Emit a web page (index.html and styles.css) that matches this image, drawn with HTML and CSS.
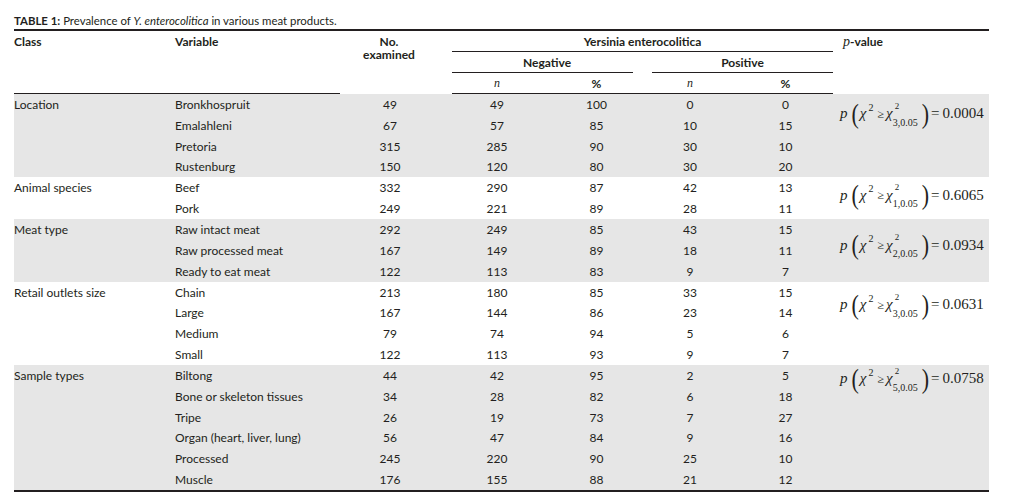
FILE: index.html
```html
<!DOCTYPE html>
<html>
<head>
<meta charset="utf-8">
<link rel="stylesheet" href="styles.css">
</head>
<body>
<div class="page">
  <div class="caption"><b>TABLE 1:</b> Prevalence of <i>Y. enterocolitica</i> in various meat products.</div>
  <table class="tbl">
    <colgroup>
      <col class="c-class"><col class="c-var"><col class="c-no"><col class="c-gap1">
      <col class="c-nn"><col class="c-np"><col class="c-gap2"><col class="c-pn"><col class="c-pp"><col class="c-pv">
    </colgroup>
    <thead>
      <tr class="hA">
        <th class="l">Class</th>
        <th class="l">Variable</th>
        <th class="noexam" rowspan="3"><span class="ln">No.</span><span class="ln">examined</span></th>
        <th rowspan="3"></th>
        <th class="rule" colspan="5">Yersinia enterocolitica</th>
        <th class="l pvh" rowspan="3"><i class="serif">p</i>-value</th>
      </tr>
      <tr class="hB">
        <th></th><th></th>
        <th class="rule neg" colspan="2">Negative</th>
        <th></th>
        <th class="rule" colspan="2">Positive</th>
      </tr>
      <tr class="hC">
        <th></th><th></th>
        <th><i class="serif n">n</i></th>
        <th class="pc">%</th>
        <th></th>
        <th><i class="serif n">n</i></th>
        <th class="pp">%</th>
      </tr>
    </thead>
    <tbody class="shade">
      <tr><td class="l">Location</td><td class="l">Bronkhospruit</td><td>49</td><td></td><td>49</td><td class="pc">100</td><td></td><td>0</td><td class="pp">0</td>
        <td class="pv o1" rowspan="4"><span class="f"><i>p</i><span class="par">(</span><i>χ</i><sup class="s1">2</sup><span class="ge">≥</span><i>χ</i><span class="ss"><span class="up">2</span><span class="dn">3,0.05</span></span><span class="par">)</span><span class="eq">=</span>0.0004</span></td></tr>
      <tr><td></td><td class="l">Emalahleni</td><td>67</td><td></td><td>57</td><td class="pc">85</td><td></td><td>10</td><td class="pp">15</td></tr>
      <tr><td></td><td class="l">Pretoria</td><td>315</td><td></td><td>285</td><td class="pc">90</td><td></td><td>30</td><td class="pp">10</td></tr>
      <tr><td></td><td class="l">Rustenburg</td><td>150</td><td></td><td>120</td><td class="pc">80</td><td></td><td>30</td><td class="pp">20</td></tr>
    </tbody>
    <tbody>
      <tr><td class="l">Animal species</td><td class="l">Beef</td><td>332</td><td></td><td>290</td><td class="pc">87</td><td></td><td>42</td><td class="pp">13</td>
        <td class="pv o2" rowspan="2"><span class="f"><i>p</i><span class="par">(</span><i>χ</i><sup class="s1">2</sup><span class="ge">≥</span><i>χ</i><span class="ss"><span class="up">2</span><span class="dn">1,0.05</span></span><span class="par">)</span><span class="eq">=</span>0.6065</span></td></tr>
      <tr><td></td><td class="l">Pork</td><td>249</td><td></td><td>221</td><td class="pc">89</td><td></td><td>28</td><td class="pp">11</td></tr>
    </tbody>
    <tbody class="shade">
      <tr><td class="l">Meat type</td><td class="l">Raw intact meat</td><td>292</td><td></td><td>249</td><td class="pc">85</td><td></td><td>43</td><td class="pp">15</td>
        <td class="pv o3" rowspan="3"><span class="f"><i>p</i><span class="par">(</span><i>χ</i><sup class="s1">2</sup><span class="ge">≥</span><i>χ</i><span class="ss"><span class="up">2</span><span class="dn">2,0.05</span></span><span class="par">)</span><span class="eq">=</span>0.0934</span></td></tr>
      <tr><td></td><td class="l">Raw processed meat</td><td>167</td><td></td><td>149</td><td class="pc">89</td><td></td><td>18</td><td class="pp">11</td></tr>
      <tr><td></td><td class="l">Ready to eat meat</td><td>122</td><td></td><td>113</td><td class="pc">83</td><td></td><td>9</td><td class="pp">7</td></tr>
    </tbody>
    <tbody>
      <tr><td class="l">Retail outlets size</td><td class="l">Chain</td><td>213</td><td></td><td>180</td><td class="pc">85</td><td></td><td>33</td><td class="pp">15</td>
        <td class="pv o4" rowspan="4"><span class="f"><i>p</i><span class="par">(</span><i>χ</i><sup class="s1">2</sup><span class="ge">≥</span><i>χ</i><span class="ss"><span class="up">2</span><span class="dn">3,0.05</span></span><span class="par">)</span><span class="eq">=</span>0.0631</span></td></tr>
      <tr><td></td><td class="l">Large</td><td>167</td><td></td><td>144</td><td class="pc">86</td><td></td><td>23</td><td class="pp">14</td></tr>
      <tr><td></td><td class="l">Medium</td><td>79</td><td></td><td>74</td><td class="pc">94</td><td></td><td>5</td><td class="pp">6</td></tr>
      <tr><td></td><td class="l">Small</td><td>122</td><td></td><td>113</td><td class="pc">93</td><td></td><td>9</td><td class="pp">7</td></tr>
    </tbody>
    <tbody class="shade last">
      <tr><td class="l">Sample types</td><td class="l">Biltong</td><td>44</td><td></td><td>42</td><td class="pc">95</td><td></td><td>2</td><td class="pp">5</td>
        <td class="pv o5" rowspan="6"><span class="f"><i>p</i><span class="par">(</span><i>χ</i><sup class="s1">2</sup><span class="ge">≥</span><i>χ</i><span class="ss"><span class="up">2</span><span class="dn">5,0.05</span></span><span class="par">)</span><span class="eq">=</span>0.0758</span></td></tr>
      <tr><td></td><td class="l">Bone or skeleton tissues</td><td>34</td><td></td><td>28</td><td class="pc">82</td><td></td><td>6</td><td class="pp">18</td></tr>
      <tr><td></td><td class="l">Tripe</td><td>26</td><td></td><td>19</td><td class="pc">73</td><td></td><td>7</td><td class="pp">27</td></tr>
      <tr><td></td><td class="l">Organ (heart, liver, lung)</td><td>56</td><td></td><td>47</td><td class="pc">84</td><td></td><td>9</td><td class="pp">16</td></tr>
      <tr><td></td><td class="l">Processed</td><td>245</td><td></td><td>220</td><td class="pc">90</td><td></td><td>25</td><td class="pp">10</td></tr>
      <tr><td></td><td class="l">Muscle</td><td>176</td><td></td><td>155</td><td class="pc">88</td><td></td><td>21</td><td class="pp">12</td></tr>
    </tbody>
  </table>
</div>
</body>
</html>
```

FILE: styles.css
```css
body {
  margin: 0;
  font-family: Lato, "Liberation Sans", sans-serif;
  color: #231f20;
  background: #fff;
}
.page {
  padding: 13px 0 0 14px;
}
.caption {
  font-size: 11.4px;
  line-height: 16px;
  height: 16px;
  white-space: nowrap;
}
.caption b { font-weight: 700; }
.tbl {
  border-collapse: collapse;
  table-layout: fixed;
  width: 975px;
  font-size: 12px;
  border-top: 2px solid #231f20;
  border-bottom: 2px solid #231f20;
}
.c-class { width: 161px; }
.c-var { width: 165px; }
.c-no { width: 100px; }
.c-gap1 { width: 12px; }
.c-nn { width: 90px; }
.c-np { width: 91px; }
.c-gap2 { width: 19px; }
.c-pn { width: 76px; }
.c-pp { width: 105px; }
.c-pv { width: 156px; }

th, td {
  padding: 0;
  text-align: center;
  white-space: nowrap;
  line-height: 13px;
}
th {
  font-weight: 700;
  vertical-align: middle;
}
th.l, td.l { text-align: left; }
.hA th { height: 20px; }
.hA th.noexam, .hA th.pvh { vertical-align: top; padding-top: 4px; }
.hA th.noexam { padding-right: 2px; }
.noexam .ln { display: block; line-height: 13px; height: 13px; }
.hA th.pvh { padding-left: 10px; }
.hB th { height: 20px; }
.hC th { height: 20px; }
.hC th { border-bottom: 1.5px solid #231f20; }
th.rule { border-bottom: 1px solid #231f20; }
th.neg { padding-left: 9px; }
.pc { padding-left: 18px; }
.pp { padding-left: 10px; }
.serif { font-family: "Liberation Serif", serif; font-weight: 400; font-style: italic; }
.pvh .serif { font-size: 14px; }
.n { font-size: 12px; }

td {
  height: 20.85px;
  vertical-align: middle;
}
.shade td { background: #e6e6e6; }

td.pv {
  vertical-align: top;
  text-align: left;
  padding-left: 7px;
}
.o1 { padding-top: 7px; }
.o2 { padding-top: 5px; }
.o3 { padding-top: 13px; }
.o4 { padding-top: 10px; }
.o5 { padding-top: 1px; }

.f {
  display: inline-flex;
  align-items: center;
  font-family: "Liberation Serif", "Times New Roman", serif;
  font-size: 15px;
  color: #231f20;
  height: 26px;
  line-height: 1;
}
.f i { font-style: italic; }
.f .par {
  font-size: 22px;
  transform: scaleY(1.25);
  margin: 0 1px 0 4px;
  display: inline-block;
}
.f .s1 {
  font-size: 10px;
  align-self: flex-start;
  margin: 2px 4px 0 2px;
  line-height: 1;
}
.f .ge { font-size: 12px; margin: 0 2px 0 0; }
.f .ss {
  display: inline-flex;
  flex-direction: column;
  font-size: 9px;
  line-height: 9px;
  margin-left: 0;
  align-self: stretch;
  justify-content: space-between;
  padding: 1px 0 0;
}
.f .ss .up { padding-left: 2px; }
.f .ss .dn { font-size: 10px; }
.f .eq { margin: 0 3px 0 1px; }
```
